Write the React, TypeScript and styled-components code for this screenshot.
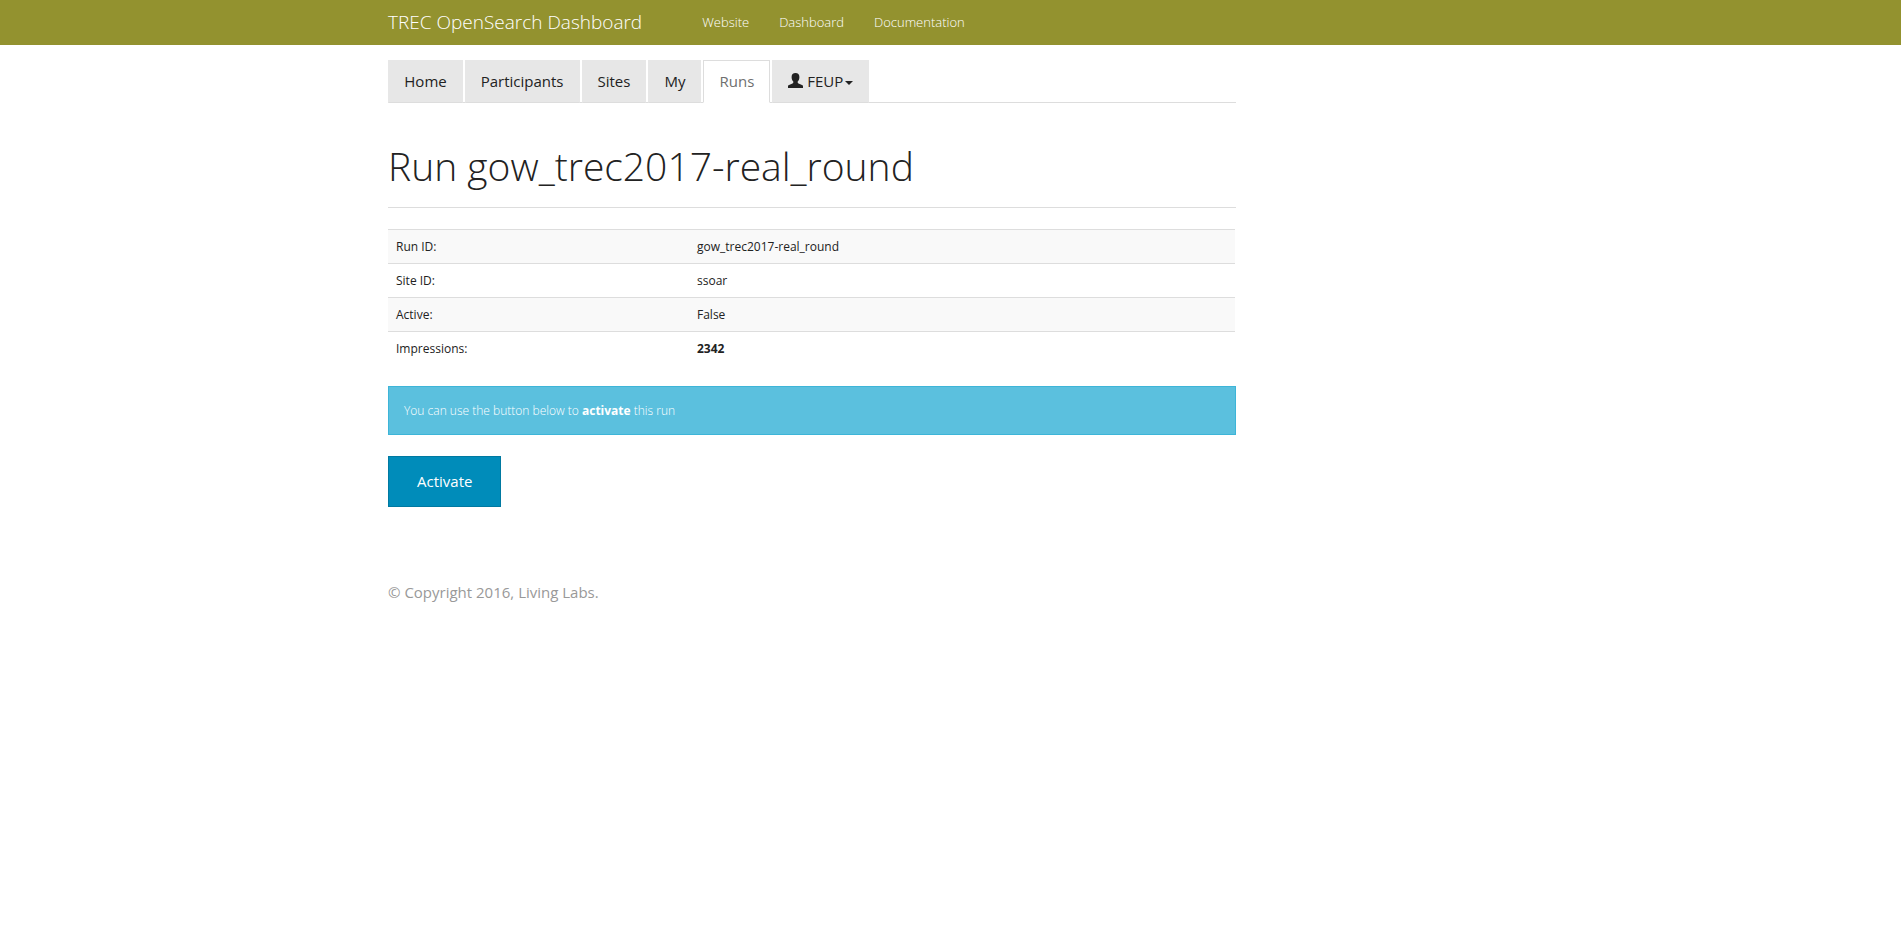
import React from "react";
import styled, { createGlobalStyle, css } from "styled-components";

const GlobalStyle = createGlobalStyle`
  *, *::before, *::after { box-sizing: border-box; }
  body {
    margin: 0;
    overflow-x: hidden;
    background: #fff;
    color: #222;
    font: 15px/1.4 "Open Sans", "Helvetica Neue", Helvetica, Arial, sans-serif;
  }
`;

const Container = styled.div`
  width: 1170px;
  margin-left: 373px;
  padding: 0 15px;
`;

const Navbar = styled.nav`
  height: 45px;
  background: #93922f;
`;

const NavbarInner = styled(Container)`
  display: flex;
`;

const Brand = styled.a`
  margin-right: 45px;
  color: #fff;
  font-size: 19px;
  font-weight: 300;
  line-height: 21px;
  padding: 12px 0;
`;

const NavbarLink = styled.a`
  padding: 12px 15px;
  color: #fff;
  font-size: 13px;
  font-weight: 300;
  line-height: 21px;
`;

const Main = styled.main`
  width: 848px;
  padding-top: 15px;
`;

const Tabs = styled.ul`
  display: flex;
  height: 43px;
  margin: 0;
  padding: 0 0 0 0.3px;
  list-style: none;
  border-bottom: 1px solid #ddd;
`;

const Tab = styled.li<{ $active?: boolean }>`
  height: 43px;
  margin-right: 2px;
  padding: 10px 15px;
  border: 1px solid #e7e7e7;
  border-bottom-color: #ddd;
  background: #e7e7e7;
  color: #222;
  line-height: 21px;
  white-space: nowrap;
  ${(p) =>
    p.$active &&
    css`
      border-color: #ddd;
      border-bottom-color: transparent;
      background: #fff;
      color: #6f6f6f;
    `}
`;

const UserIcon = styled.svg`
  width: 15px;
  height: 15px;
  margin-right: 4px;
  vertical-align: -1px;
`;

const Caret = styled.span`
  display: inline-block;
  margin-left: 2px;
  vertical-align: middle;
  border-top: 4px solid;
  border-right: 4px solid transparent;
  border-left: 4px solid transparent;
`;

const PageHeader = styled.header`
  margin: 42px 0 21px;
  padding-bottom: 20px;
  border-bottom: 1px solid #ddd;
`;

const Title = styled.h1`
  margin: 0;
  font-size: 39px;
  font-weight: 300;
  line-height: 42px;
`;

const Strong = styled.strong`
  font-weight: 700;
`;

const Table = styled.table`
  width: 847px;
  margin-bottom: 21px;
  border-collapse: separate;
  border-spacing: 0;
  table-layout: fixed;
  font-size: 12px;
`;

const Row = styled.tr`
  &:nth-child(odd) {
    background: #f9f9f9;
  }
`;

const Cell = styled.td<{ $width?: number }>`
  width: ${(p) => (p.$width ? `${p.$width}px` : "auto")};
  height: 34px;
  padding: 8px;
  border-top: 1px solid #ddd;
  line-height: 17px;
`;

const Alert = styled.div`
  margin-bottom: 21px;
  padding: 15px;
  border: 1px solid #3db5d8;
  background: #5bc0de;
  color: #fff;
  font-size: 12px;
  font-weight: 300;
  line-height: 17px;
`;

const Button = styled.button`
  display: block;
  padding: 14px 28px;
  border: 1px solid #0079a1;
  background: #008cba;
  color: #fff;
  font: inherit;
  line-height: 21px;
`;

const Footer = styled.footer`
  margin-top: 75px;
  color: #999;
`;

const rows: [string, React.ReactNode][] = [
  ["Run ID:", "gow_trec2017-real_round"],
  ["Site ID:", "ssoar"],
  ["Active:", "False"],
  ["Impressions:", <Strong key="count">2342</Strong>],
];

export default function App() {
  return (
    <>
      <GlobalStyle />
      <Navbar>
        <NavbarInner>
          <Brand>TREC OpenSearch Dashboard</Brand>
          <NavbarLink>Website</NavbarLink>
          <NavbarLink>Dashboard</NavbarLink>
          <NavbarLink>Documentation</NavbarLink>
        </NavbarInner>
      </Navbar>
      <Container>
        <Main>
          <Tabs>
            <Tab>Home</Tab>
            <Tab>Participants</Tab>
            <Tab>Sites</Tab>
            <Tab>My</Tab>
            <Tab $active>Runs</Tab>
            <Tab>
              <UserIcon viewBox="0 0 15 15" fill="currentColor" aria-hidden="true">
                <path d="M7.5 0C10 0 11.400 1.500 11.400 4c0 2-.7 3.600-1.700 4.600v1c0 .5.3.8.8 1l3.500 1.300c.8.3 1 .8 1 1.600V15H0v-1.500c0-.8.200-1.300 1-1.600l3.500-1.300c.5-.2.8-.5.8-1v-1C4.300 7.600 3.600 6 3.600 4 3.600 1.500 5 0 7.500 0Z" />
              </UserIcon>
              FEUP
              <Caret />
            </Tab>
          </Tabs>
          <PageHeader>
            <Title>Run gow_trec2017-real_round</Title>
          </PageHeader>
          <Table>
            <tbody>
              {rows.map(([label, value]) => (
                <Row key={label}>
                  <Cell $width={301}>{label}</Cell>
                  <Cell>{value}</Cell>
                </Row>
              ))}
            </tbody>
          </Table>
          <Alert>
            You can use the button below to <Strong>activate</Strong> this run
          </Alert>
          <Button>Activate</Button>
          <Footer>© Copyright 2016, Living Labs.</Footer>
        </Main>
      </Container>
    </>
  );
}
